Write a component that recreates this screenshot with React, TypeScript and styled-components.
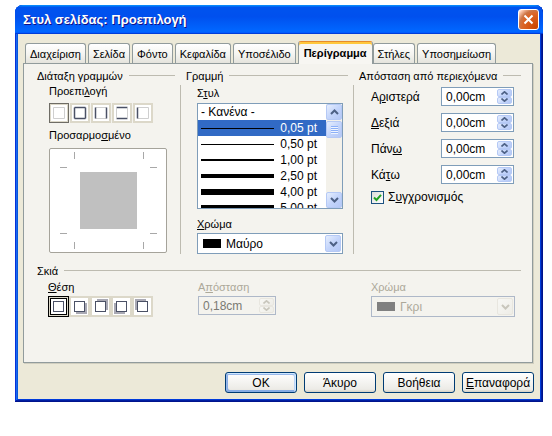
import React from 'react'
import styled, { createGlobalStyle, css } from 'styled-components'

const GlobalStyle = createGlobalStyle`
  html, body { margin: 0; padding: 0; background: #ffffff; }
  body {
    font-family: "Liberation Sans", Arial, sans-serif;
    font-size: 11px;
    color: #000000;
  }
`

const Page = styled.div`
  padding: 5px 0 0 15px;
`

const Window = styled.div`
  width: 528px;
  height: 397px;
  box-sizing: border-box;
  display: flex;
  flex-direction: column;
  background: #0055ea;
  border-radius: 8px 8px 0 0;
  box-shadow: inset -1px -1px #00138c, inset 1px 1px #0831d9, inset -2px -2px #001ea0,
    inset 2px 2px #166aee, inset -3px -3px #003bda, inset 3px 3px #0855dd;
`

const TitleBar = styled.div`
  height: 29px;
  flex: none;
  display: flex;
  align-items: center;
  justify-content: space-between;
  padding: 0 4px 0 8px;
  border-radius: 8px 8px 0 0;
  background: linear-gradient(180deg, #0997ff, #0053ee 8%, #0050ee 40%, #06f 88%, #06f 93%, #005bff 95%, #003dd7 96%, #003dd7);
`

const TitleText = styled.span`
  color: #ffffff;
  font-family: "Liberation Sans", Arial, sans-serif;
  font-weight: bold;
  font-size: 13px;
  text-shadow: 1px 1px #0f1089;
`

const CloseButton = styled.div`
  width: 21px;
  height: 21px;
  box-sizing: border-box;
  border: 1px solid #ffffff;
  border-radius: 3px;
  display: flex;
  align-items: center;
  justify-content: center;
  background: radial-gradient(circle at 90% 90%, #cc4600 0%, #dc6527 55%, #cd7546 70%, #ffccb2 90%, #ffffff 100%);
`

const Body = styled.div`
  flex: 1;
  margin: 0 3px 3px 3px;
  background: #ece9d8;
  padding: 7px 6px 6px 5px;
  display: flex;
  flex-direction: column;
`

const TabStrip = styled.div`
  height: 22px;
  display: flex;
  align-items: flex-end;
  padding-left: 2px;
  position: relative;
  z-index: 2;
`

const Tab = styled.div<{ $active?: boolean }>`
  height: 20px;
  box-sizing: border-box;
  padding: 0 4px;
  margin-right: 2px;
  display: flex;
  align-items: center;
  border: 1px solid #919b9c;
  border-bottom: none;
  border-radius: 3px 3px 0 0;
  background: linear-gradient(#ffffff, #f4f4f0 55%, #e4e3dc);
  white-space: nowrap;
  ${p => p.$active && css`
    height: 23px;
    margin: 0 0 -1px 0;
    padding: 0 5px;
    font-weight: bold;
    background: #f7f6f2;
    border-top: 1px solid #e68b2c;
    box-shadow: inset 0 2px #ffc83c;
  `}
`

const Panel = styled.div`
  height: 300px;
  box-sizing: border-box;
  margin-right: 1px;
  border: 1px solid #919b9c;
  background: #f4f3ee;
  box-shadow: 1px 1px 0 #d0cebf;
  padding: 5px 11px 0 13px;
  display: flex;
  flex-direction: column;
`

const TopGrid = styled.div`
  display: grid;
  grid-template-columns: 143px 173px 1fr;
  height: 185px;
`

const Frame = styled.div`
  display: flex;
  flex-direction: column;
`

const FrameTitle = styled.div<{ $indent?: number; $trail?: number }>`
  height: 13px;
  display: flex;
  align-items: center;
  gap: 6px;
  padding-left: ${p => p.$indent ?? 0}px;
  margin-right: ${p => p.$trail ?? 5}px;
  white-space: nowrap;
  &::after {
    content: '';
    flex: 1;
    height: 1px;
    background: #bdbbb0;
  }
`

const FrameBody = styled.div<{ $sep?: boolean; $pad: number }>`
  flex: 1;
  margin-top: 3px;
  padding-left: ${p => p.$pad}px;
  display: flex;
  flex-direction: column;
  ${p => p.$sep && css`border-left: 1px solid #bdbbb0;`}
`

const Label = styled.div<{ $top?: number; $disabled?: boolean }>`
  height: 13px;
  line-height: 13px;
  margin-top: ${p => p.$top ?? 0}px;
  white-space: nowrap;
  color: ${p => (p.$disabled ? '#aca899' : '#000000')};
`

const U = styled.span`
  text-decoration: underline;
`

const PresetRow = styled.div`
  display: flex;
  gap: 1px;
  margin-top: 5px;
  height: 20px;
`

const Preview = styled.div`
  margin-top: 6px;
  width: 118px;
  height: 105px;
  box-sizing: border-box;
  border: 1px solid #a5a39a;
  border-radius: 2px;
  background: #ffffff;
`

const ListBox = styled.div`
  margin-top: 3px;
  width: 146px;
  height: 106px;
  box-sizing: border-box;
  border: 1px solid #7f9db9;
  background: #ffffff;
  display: flex;
  overflow: hidden;
`

const ListRows = styled.div`
  flex: 1;
  display: flex;
  flex-direction: column;
`

const ListRow = styled.div<{ $selected?: boolean }>`
  height: 16px;
  flex: none;
  display: flex;
  align-items: center;
  padding: 0 9px 0 3px;
  font-size: 12px;
  white-space: nowrap;
  ${p => p.$selected && css`
    background: #316ac5;
    color: #ffffff;
  `}
`

const Stroke = styled.div<{ $w: number }>`
  width: 73px;
  height: ${p => p.$w}px;
  background: #000000;
`

const RowValue = styled.span`
  margin-left: auto;
`

const ScrollBar = styled.div`
  width: 16px;
  flex: none;
  display: flex;
  flex-direction: column;
  background: #f3f1ea;
`

const XpButton = styled.div<{ $disabled?: boolean }>`
  box-sizing: border-box;
  display: flex;
  align-items: center;
  justify-content: center;
  border: 1px solid #b5c9f5;
  border-radius: 2px;
  background: linear-gradient(135deg, #e6eefd, #c4d5fb 50%, #b4c8f6);
  ${p => p.$disabled && css`
    border-color: #e8e6df;
    background: linear-gradient(135deg, #f7f7f4, #eeede7);
  `}
`

const ScrollArrow = styled(XpButton)`
  height: 16px;
  flex: none;
`

const ScrollTrack = styled.div`
  flex: 1;
  padding-top: 1px;
`

const Thumb = styled(XpButton)`
  height: 17px;
  flex-direction: column;
  gap: 1px;
`

const Grip = styled.div`
  width: 7px;
  height: 1px;
  background: #8cb0f8;
  box-shadow: 0 1px #eef4fe;
`

const Combo = styled.div<{ $w: number; $disabled?: boolean }>`
  width: ${p => p.$w}px;
  height: 21px;
  box-sizing: border-box;
  border: 1px solid ${p => (p.$disabled ? '#aeb8c8' : '#7f9db9')};
  background: ${p => (p.$disabled ? '#f4f3ee' : '#ffffff')};
  display: flex;
  align-items: center;
  padding: 1px;
  gap: 5px;
  color: ${p => (p.$disabled ? '#aca899' : '#000000')};
  font-size: 12px;
`

const Swatch = styled.div<{ $color: string }>`
  width: 18px;
  height: 9px;
  margin-left: 4px;
  background: ${p => p.$color};
`

const ComboText = styled.span`
  flex: 1;
`

const ComboButton = styled(XpButton)`
  width: 16px;
  height: 17px;
`

const Spin = styled.div<{ $w: number; $disabled?: boolean }>`
  width: ${p => p.$w}px;
  height: 19px;
  box-sizing: border-box;
  border: 1px solid ${p => (p.$disabled ? '#aeb8c8' : '#7f9db9')};
  background: ${p => (p.$disabled ? '#f4f3ee' : '#ffffff')};
  display: flex;
  align-items: center;
  padding: 1px;
  font-size: 12px;
  color: ${p => (p.$disabled ? '#7a7a72' : '#000000')};
`

const SpinText = styled.span`
  flex: 1;
  padding-left: 3px;
`

const SpinButtons = styled.div`
  width: 15px;
  height: 100%;
  display: flex;
  flex-direction: column;
`

const SpinHalf = styled(XpButton)`
  flex: 1;
`

const DistRow = styled.div<{ $top: number }>`
  display: flex;
  align-items: center;
  margin-top: ${p => p.$top}px;
`

const DistLabel = styled.div`
  width: 70px;
  font-size: 12px;
`

const CheckRow = styled.div`
  display: flex;
  align-items: center;
  gap: 4px;
  margin-top: 6px;
  font-size: 12px;
`

const CheckBox = styled.div`
  width: 13px;
  height: 13px;
  box-sizing: border-box;
  border: 1px solid #1c5180;
  background: linear-gradient(135deg, #dcdcd7, #ffffff);
  display: flex;
  align-items: center;
  justify-content: center;
`

const ShadowTitle = styled(FrameTitle)`
  margin-top: 10px;
`

const ShadowGrid = styled.div`
  display: grid;
  grid-template-columns: 150px 173px 1fr;
  padding-left: 11px;
  margin-top: 4px;
`

const ShadowCol = styled.div`
  display: flex;
  flex-direction: column;
  gap: 2px;
`

const ShadowRow = styled.div`
  display: flex;
  height: 21px;
`

const Footer = styled.div`
  display: flex;
  justify-content: flex-end;
  gap: 7px;
  margin-top: 9px;
`

const Button = styled.div<{ $default?: boolean }>`
  width: 72px;
  height: 21px;
  box-sizing: border-box;
  border: 1px solid #003c74;
  border-radius: 3px;
  background: linear-gradient(180deg, #ffffff, #ecebe6 86%, #d6d0c5);
  display: flex;
  align-items: center;
  justify-content: center;
  font-size: 12px;
  ${p => p.$default && css`
    box-shadow: inset -1px 1px #cee7ff, inset 1px 2px #98b8ea, inset -2px 2px #bcd4f6,
      inset 1px -1px #89ade4, inset 2px -2px #89ade4;
  `}
`

const Chevron = ({ dir, color = '#4d6185' }: { dir: 'up' | 'down'; color?: string }) => (
  <svg width="7" height="4" viewBox="0 0 7 4">
    <path d={dir === 'up' ? 'M0.5 3.5 L3.5 0.8 L6.5 3.5' : 'M0.5 0.5 L3.5 3.2 L6.5 0.5'} fill="none" stroke={color} strokeWidth="1.6" />
  </svg>
)

const BigChevron = ({ dir, color = '#4d6185' }: { dir: 'up' | 'down'; color?: string }) => (
  <svg width="9" height="6" viewBox="0 0 9 6">
    <path d={dir === 'up' ? 'M1 5 L4.5 1.5 L8 5' : 'M1 1 L4.5 4.5 L8 1'} fill="none" stroke={color} strokeWidth="2" />
  </svg>
)

type Sides = { t?: boolean; r?: boolean; b?: boolean; l?: boolean }

const PresetIcon = ({ sides, focus }: { sides: Sides; focus?: boolean }) => {
  const on = '#4b5166'
  const off = '#cfcfcf'
  return (
    <svg width="20" height="20" viewBox="0 0 20 20">
      <rect x="0" y="0" width="20" height="20" fill="#dcd8c9" />
      <rect x="2" y="2" width="16" height="16" fill="#ffffff" />
      <line x1="4.5" y1="4.5" x2="15.5" y2="4.5" stroke={sides.t ? on : off} strokeWidth={sides.t ? 1.5 : 1} />
      <line x1="4.5" y1="15.5" x2="15.5" y2="15.5" stroke={sides.b ? on : off} strokeWidth={sides.b ? 1.5 : 1} />
      <line x1="4.5" y1="4.5" x2="4.5" y2="15.5" stroke={sides.l ? on : off} strokeWidth={sides.l ? 1.5 : 1} />
      <line x1="15.5" y1="4.5" x2="15.5" y2="15.5" stroke={sides.r ? on : off} strokeWidth={sides.r ? 1.5 : 1} />
      {focus && <rect x="0.5" y="0.5" width="19" height="19" fill="none" stroke="#000" strokeDasharray="1 1" />}
    </svg>
  )
}

const ShadowIcon = ({ dx, dy, selected }: { dx: number; dy: number; selected?: boolean }) => (
  <svg width="21" height="21" viewBox="0 0 21 21">
    <rect x="0" y="0" width="21" height="21" fill="#dcd8c9" />
    <rect x="2" y="2" width="17" height="17" fill="#ffffff" />
    {(dx !== 0 || dy !== 0) && <rect x={5 + dx} y={5 + dy} width="11" height="11" fill="#a9a9b4" />}
    <rect x="5.5" y="5.5" width="10" height="10" fill="#ffffff" stroke="#4b5166" />
    {selected && (
      <>
        <rect x="0.5" y="0.5" width="20" height="20" fill="none" stroke="#000" />
        <rect x="2.5" y="2.5" width="16" height="16" fill="none" stroke="#000" />
      </>
    )}
  </svg>
)

const PreviewDrawing = () => (
  <svg width="116" height="103" viewBox="0 0 116 103">
    <g stroke="#a8a8a8" strokeWidth="1">
      <line x1="24.5" y1="3" x2="24.5" y2="10" />
      <line x1="93.5" y1="3" x2="93.5" y2="10" />
      <line x1="24.5" y1="93" x2="24.5" y2="100" />
      <line x1="93.5" y1="93" x2="93.5" y2="100" />
      <line x1="10" y1="18.5" x2="17" y2="18.5" />
      <line x1="100" y1="18.5" x2="107" y2="18.5" />
      <line x1="10" y1="84.5" x2="17" y2="84.5" />
      <line x1="100" y1="84.5" x2="107" y2="84.5" />
    </g>
    <rect x="30" y="23" width="57" height="57" fill="#c0c0c0" />
  </svg>
)

const presets: Sides[] = [{}, { t: true, r: true, b: true, l: true }, { l: true, r: true }, { t: true, b: true }, { l: true }]

const styles = [
  { w: 1, v: '0,05 pt' },
  { w: 1, v: '0,50 pt' },
  { w: 2, v: '1,00 pt' },
  { w: 4, v: '2,50 pt' },
  { w: 6, v: '4,00 pt' },
  { w: 7, v: '5,00 pt' },
]

const distances = [
  { label: <>Α<U>ρ</U>ιστερά</> },
  { label: <><U>Δ</U>εξιά</> },
  { label: <>Πάν<U>ω</U></> },
  { label: <>Κά<U>τ</U>ω</> },
]

const tabs = ['Διαχείριση', 'Σελίδα', 'Φόντο', 'Κεφαλίδα', 'Υποσέλιδο', 'Περίγραμμα', 'Στήλες', 'Υποσημείωση']

const SpinField = ({ value, w, disabled }: { value: string; w: number; disabled?: boolean }) => (
  <Spin $w={w} $disabled={disabled}>
    <SpinText>{value}</SpinText>
    <SpinButtons>
      <SpinHalf $disabled={disabled}><Chevron dir="up" color={disabled ? '#c8c6bc' : '#4d6185'} /></SpinHalf>
      <SpinHalf $disabled={disabled}><Chevron dir="down" color={disabled ? '#c8c6bc' : '#4d6185'} /></SpinHalf>
    </SpinButtons>
  </Spin>
)

export default function App() {
  return (
    <Page>
      <GlobalStyle />
      <Window>
        <TitleBar>
          <TitleText>Στυλ σελίδας: Προεπιλογή</TitleText>
          <CloseButton>
            <svg width="11" height="11" viewBox="0 0 11 11">
              <path d="M1.5 1.5 L9.5 9.5 M9.5 1.5 L1.5 9.5" stroke="#ffffff" strokeWidth="2" />
            </svg>
          </CloseButton>
        </TitleBar>
        <Body>
          <TabStrip>
            {tabs.map(t => (
              <Tab key={t} $active={t === 'Περίγραμμα'}>{t}</Tab>
            ))}
          </TabStrip>
          <Panel>
            <TopGrid>
              <Frame>
                <FrameTitle>Διάταξη γραμμών</FrameTitle>
                <FrameBody $pad={12}>
                  <Label>Προεπι<U>λ</U>ογή</Label>
                  <PresetRow>
                    {presets.map((s, i) => (
                      <PresetIcon key={i} sides={s} focus={i === 0} />
                    ))}
                  </PresetRow>
                  <Label $top={6}>Προσαρμο<U>σ</U>μένο</Label>
                  <Preview>
                    <PreviewDrawing />
                  </Preview>
                </FrameBody>
              </Frame>
              <Frame>
                <FrameTitle $indent={6}>Γραμμή</FrameTitle>
                <FrameBody $sep $pad={16}>
                  <Label $top={2}>Σ<U>τ</U>υλ</Label>
                  <ListBox>
                    <ListRows>
                      <ListRow>- Κανένα -</ListRow>
                      {styles.map((s, i) => (
                        <ListRow key={s.v} $selected={i === 0}>
                          <Stroke $w={s.w} />
                          <RowValue>{s.v}</RowValue>
                        </ListRow>
                      ))}
                    </ListRows>
                    <ScrollBar>
                      <ScrollArrow><BigChevron dir="up" /></ScrollArrow>
                      <ScrollTrack>
                        <Thumb><Grip /><Grip /><Grip /><Grip /></Thumb>
                      </ScrollTrack>
                      <ScrollArrow><BigChevron dir="down" /></ScrollArrow>
                    </ScrollBar>
                  </ListBox>
                  <Label $top={9}><U>Χ</U>ρώμα</Label>
                  <Combo $w={146} style={{ marginTop: 2 }}>
                    <Swatch $color="#000000" />
                    <ComboText>Μαύρο</ComboText>
                    <ComboButton><BigChevron dir="down" /></ComboButton>
                  </Combo>
                </FrameBody>
              </Frame>
              <Frame>
                <FrameTitle $indent={6} $trail={0}>Απόσταση από περιεχόμενα</FrameTitle>
                <FrameBody $sep $pad={17}>
                  {distances.map((d, i) => (
                    <DistRow key={i} $top={i === 0 ? 2 : 7}>
                      <DistLabel>{d.label}</DistLabel>
                      <SpinField value="0,00cm" w={73} />
                    </DistRow>
                  ))}
                  <CheckRow>
                    <CheckBox>
                      <svg width="9" height="9" viewBox="0 0 9 9">
                        <path d="M1 4.5 L3.5 7 L8 1.8" fill="none" stroke="#21a121" strokeWidth="2" />
                      </svg>
                    </CheckBox>
                    <span>Σ<U>υ</U>γχρονισμός</span>
                  </CheckRow>
                </FrameBody>
              </Frame>
            </TopGrid>
            <ShadowTitle $trail={0}>Σκιά</ShadowTitle>
            <ShadowGrid>
              <ShadowCol>
                <Label><U>Θ</U>έση</Label>
                <ShadowRow>
                  <ShadowIcon dx={0} dy={0} selected />
                  <ShadowIcon dx={2} dy={2} />
                  <ShadowIcon dx={2} dy={-2} />
                  <ShadowIcon dx={-2} dy={2} />
                  <ShadowIcon dx={-2} dy={-2} />
                </ShadowRow>
              </ShadowCol>
              <ShadowCol>
                <Label $disabled>Α<U>π</U>όσταση</Label>
                <SpinField value="0,18cm" w={78} disabled />
              </ShadowCol>
              <ShadowCol>
                <Label $disabled>Χρώμα</Label>
                <Combo $w={144} $disabled>
                  <Swatch $color="#808080" />
                  <ComboText>Γκρι</ComboText>
                  <ComboButton $disabled><BigChevron dir="down" color="#c8c6bc" /></ComboButton>
                </Combo>
              </ShadowCol>
            </ShadowGrid>
          </Panel>
          <Footer>
            <Button $default>OK</Button>
            <Button>Άκυρο</Button>
            <Button>Βοήθεια</Button>
            <Button><U>Ε</U>παναφορά</Button>
          </Footer>
        </Body>
      </Window>
    </Page>
  )
}
